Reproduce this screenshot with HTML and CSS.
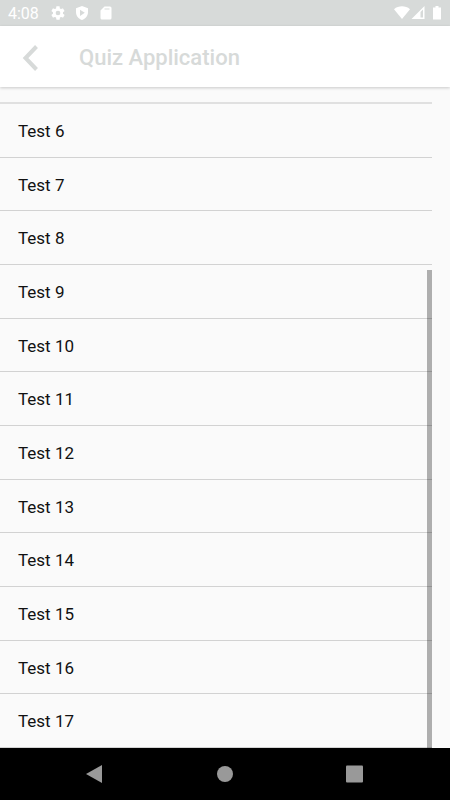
FILE: index.html
```html
<!DOCTYPE html>
<html lang="en">
<head>
<meta charset="utf-8">
<meta name="viewport" content="width=device-width, initial-scale=1">
<title>Quiz Application</title>
<link rel="stylesheet" href="styles.css">
</head>
<body>
<div class="status">
  <span class="clock">4:08</span>
  <div class="notices">
    <svg width="16" height="16" viewBox="0 0 24 24"><path d="M19.4 13c0-.3.1-.6.1-1s0-.7-.1-1l2.100-1.600c.2-.2.2-.4.1-.6l-2-3.500c-.1-.2-.4-.3-.6-.2l-2.500 1c-.5-.4-1.100-.7-1.700-1l-.4-2.600c0-.3-.2-.5-.4-.5h-4c-.2 0-.4.2-.5.400l-.4 2.700c-.6.300-1.200.600-1.700 1l-2.500-1c-.2-.1-.5 0-.6.2l-2 3.500c-.1.200-.1.500.1.600L4.500 11c0 .300-.1.600-.1 1s0 .700.1 1l-2.100 1.600c-.2.200-.2.400-.1.600l2 3.500c.1.200.4.300.6.200l2.500-1c.5.400 1.100.700 1.700 1l.4 2.600c0 .300.2.500.5.500h4c.2 0 .4-.2.5-.4l.4-2.700c.6-.3 1.200-.6 1.700-1l2.500 1c.2.100.5 0 .6-.2l2-3.500c.1-.2.100-.5-.1-.6zM12 15.500a3.500 3.500 0 1 1 0-7 3.500 3.500 0 0 1 0 7z"/></svg>
    <svg width="16" height="16" viewBox="0 0 16 16"><path fill-rule="evenodd" d="M8 1l6 2.300V7c0 4-2.500 6.800-6 8-3.500-1.200-6-4-6-8V3.300zM6 4.700v6.200L10.800 7.800z"/></svg>
    <svg width="16" height="16" viewBox="0 0 16 16"><path fill-rule="evenodd" d="M6.500 1.500H12q1.500 0 1.500 1.500v10q0 1.500-1.500 1.500H4Q2.500 14.500 2.500 13V5.500zM6.500 3.500v1h5v-1z"/></svg>
  </div>
  <div class="signals">
    <svg width="16" height="16" viewBox="0 0 16 16"><path d="M0 4.200C4.500.4 11.500.4 16 4.200L8 14z"/></svg>
    <svg width="14" height="16" viewBox="0 0 14 16"><path fill-rule="evenodd" d="M13.500 1v13H.5zM12 4.500L9.500 7v5.500H12z"/></svg>
    <svg class="battery" width="8" height="16" viewBox="0 0 8 16"><path d="M2.500 1h3v1.500H8V14.500H0V2.500h2.500z"/></svg>
  </div>
</div>
<header class="appbar">
  <button class="back" aria-label="Back"><svg width="16" height="26" viewBox="0 0 16 26"><path d="M14.500 1.500L3.500 13l11 11.500"/></svg></button>
  <h1>Quiz Application</h1>
</header>
<main class="content">
  <div class="pane">
    <ul class="tests">
      <li>Test 6</li>
      <li>Test 7</li>
      <li>Test 8</li>
      <li>Test 9</li>
      <li>Test 10</li>
      <li>Test 11</li>
      <li>Test 12</li>
      <li>Test 13</li>
      <li>Test 14</li>
      <li>Test 15</li>
      <li>Test 16</li>
      <li>Test 17</li>
    </ul>
    <div class="thumb"></div>
  </div>
</main>
<nav class="navbar">
  <button aria-label="Back"><svg width="18" height="18" viewBox="0 0 18 18"><path d="M16 0v18L0 9z"/></svg></button>
  <button aria-label="Home"><svg width="18" height="18" viewBox="0 0 18 18"><circle cx="9" cy="9" r="8"/></svg></button>
  <button aria-label="Recent apps"><svg width="18" height="18" viewBox="0 0 18 18"><rect y=".5" width="17" height="17" rx="1"/></svg></button>
</nav>
</body>
</html>
```
FILE: styles.css
```css
* {
  box-sizing: border-box;
}

body {
  margin: 0;
  min-height: 100vh;
  display: flex;
  flex-direction: column;
  background: #fafafa;
  color: #111;
  font-family: Roboto, sans-serif;
}

svg {
  display: block;
}

button {
  padding: 0;
  border: 0;
  background: none;
}

.status {
  height: 26px;
  padding: 0 9px 0 8px;
  display: flex;
  align-items: center;
  background: #d7dad9;
  color: #fff;
  fill: #fff;
}

.clock {
  width: 42px;
  padding-top: 1px;
  font-size: 16px;
  line-height: 26px;
}

.notices {
  display: flex;
  gap: 8px;
}

.signals {
  display: flex;
  gap: 1px;
  margin-left: auto;
}

.battery {
  margin-left: 7px;
}

.appbar {
  position: relative;
  height: 61px;
  padding: 2px 0 0 22px;
  display: flex;
  align-items: center;
  background: #fff;
  box-shadow: 0 1px 3px rgba(0, 0, 0, 0.2);
}

.back {
  width: 57px;
}

.back path {
  fill: none;
  stroke: #d7dad9;
  stroke-width: 4;
}

h1 {
  margin: 0;
  color: #d7dad9;
  font-size: 22px;
  font-weight: 500;
  line-height: 26px;
}

.content {
  flex: 1;
  display: flex;
  padding: 15px 18px 0 0;
}

.pane {
  position: relative;
  flex: 1;
  display: flex;
}

.tests {
  flex: 1;
  display: flex;
  flex-direction: column;
  margin: 0;
  padding: 0;
  border-top: 2px solid #e0e0e0;
  list-style: none;
}

.tests li {
  flex: 1;
  display: flex;
  align-items: center;
  padding: 1px 0 0 18px;
  border-bottom: 1px solid #d2d2d2;
  font-size: 17px;
  line-height: 20px;
}

.thumb {
  position: absolute;
  top: 26%;
  right: 0;
  bottom: 0;
  width: 5px;
  background: rgba(0, 0, 0, 0.3);
}

.navbar {
  height: 52px;
  padding: 0 78px;
  display: flex;
  align-items: center;
  justify-content: space-between;
  background: #000;
  fill: #999;
}

.navbar button {
  width: 34px;
  fill: inherit;
}

.navbar svg {
  margin: 0 auto;
}
```
